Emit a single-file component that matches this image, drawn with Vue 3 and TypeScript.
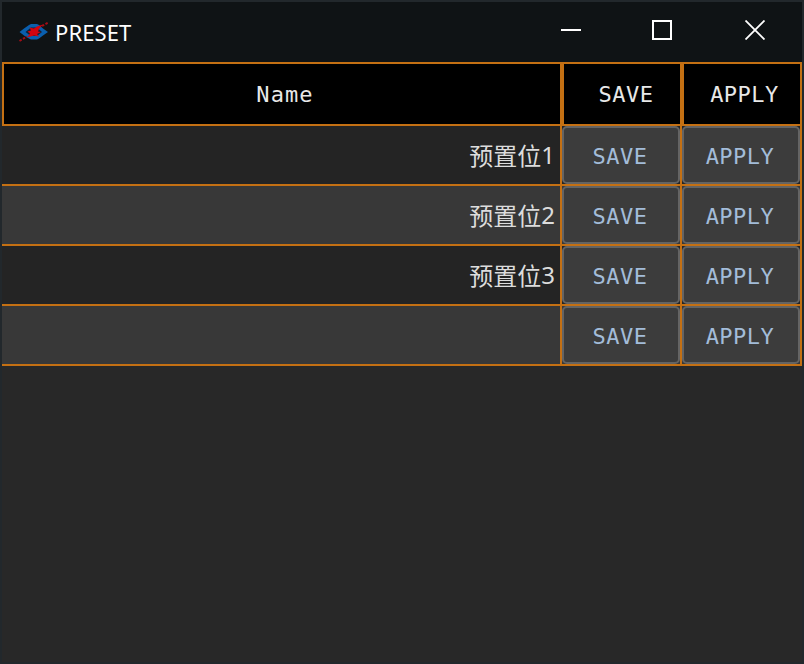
<script setup lang="ts">
import { ref } from 'vue'

interface Preset {
  id: number
  name: string
}

const title = ref('PRESET')
const presets = ref<Preset[]>([
  { id: 1, name: '预置位1' },
  { id: 2, name: '预置位2' },
  { id: 3, name: '预置位3' },
  { id: 4, name: '' },
])

function split(name: string): { label: string; digit: string } {
  return { label: name.replace(/\d+$/, ''), digit: name.match(/\d+$/)?.[0] ?? '' }
}
</script>

<template>
  <div class="window">
    <header class="titlebar">
      <svg class="logo" width="30" height="20" viewBox="0 0 30 20">
        <path d="M0.5 10 L5 6.5 L10 3 L12 2 H18 L20 3 L24 6.5 L29 10 L24 13.5 L20 16.5 L18 17.5 H12 L9 16 L5 13.5 Z" fill="#0a5fae" />
        <path d="M6.5 10 L12 5.5 H18 L23 10 L18 14 H12 Z" fill="#0f2136" />
        <path d="M8 15.5 L11 11.5 L8.5 9.5 L12 8.5 L10.5 5.5 L15 6.5 L18 4.5 L24 2.5 L20 7 L19 9.5 L22 10 L18 12 L20 14.5 L15 13.5 Z" fill="#d2040f" />
        <path d="M0.5 19 L8 14.5 M23 4 L29 0.6" stroke="#a30d16" stroke-width="2" stroke-dasharray="2.5 1.5" />
      </svg>
      <span class="title">{{ title }}</span>
      <div class="controls">
        <svg width="20" height="20" viewBox="0 0 20 20"><path d="M0 10H20" /></svg>
        <svg width="20" height="20" viewBox="0 0 20 20"><path d="M1 1H19V19H1Z" /></svg>
        <svg width="20" height="20" viewBox="0 0 20 20"><path class="thin" d="M0.5 0.5L19.5 19.5M19.5 0.5L0.5 19.5" /></svg>
      </div>
    </header>
    <main class="table">
      <div class="row head">
        <div class="th"><span>Name</span></div>
        <div class="th save"><span>SAVE</span></div>
        <div class="th apply"><span>APPLY</span></div>
      </div>
      <div v-for="p in presets" :key="p.id" class="row">
        <div class="td name"><span class="cjk">{{ split(p.name).label }}</span><span class="digit">{{ split(p.name).digit }}</span></div>
        <div class="td"><button type="button">SAVE</button></div>
        <div class="td"><button type="button">APPLY</button></div>
      </div>
    </main>
  </div>
</template>

<style>
body {
  margin: 0;
  background: #282828;
}
</style>

<style scoped>
.window {
  box-sizing: border-box;
  width: 804px;
  height: 664px;
  border: 2px solid #22282c;
  background: #282828;
  overflow: hidden;
}
.titlebar {
  display: flex;
  align-items: center;
  height: 60px;
  background: #0f1315;
  color: #fff;
}
.logo {
  margin-left: 17px;
  flex: none;
}
.title {
  margin-left: 6px;
  padding-bottom: 1px;
  font: 22px/30px "Noto Sans", sans-serif;
  letter-spacing: 0.1px;
}
.controls {
  display: flex;
  gap: 73px;
  margin: -4px 37px 0 auto;
}
.controls svg:first-child {
  margin-right: -2px;
}
.controls svg {
  fill: none;
  stroke: #fff;
  stroke-width: 2;
}
.controls .thin {
  stroke-width: 1.8;
}
.row {
  display: grid;
  grid-template-columns: 560px 120px 120px;
  height: 60px;
  background: #242424;
  font: 22px/28px "DejaVu Sans Mono", monospace;
  letter-spacing: 0.5px;
}
.row:nth-child(odd) {
  background: #383838;
}
.row.head {
  height: 64px;
  background: #000;
  color: #e8e8e8;
}
.th {
  box-sizing: border-box;
  border: 2px solid #c47013;
  display: flex;
  align-items: center;
  justify-content: center;
  padding: 2px 0 0 6px;
}
.th:first-child {
  letter-spacing: 1.1px;
}
.th.save {
  padding-left: 8px;
}
.th.apply {
  padding-left: 5px;
}
.td {
  box-sizing: border-box;
  display: flex;
  border-right: 2px solid #c47013;
  border-bottom: 2px solid #c47013;
  min-width: 0;
}
.name {
  align-items: center;
  justify-content: flex-end;
  padding-right: 5px;
  color: #dcdcdc;
}
.cjk {
  font: 24px/30px "Noto Sans CJK SC", sans-serif;
  letter-spacing: 0;
}
.digit {
  font: 24px/30px "Noto Sans", sans-serif;
  letter-spacing: 0;
}
button {
  box-sizing: border-box;
  width: 100%;
  height: 58px;
  margin: 0;
  padding: 4px 2px 0 0;
  border: 2px solid #646464;
  border-radius: 5px;
  background: #3c3c3c;
  color: #a3bcd9;
  font: inherit;
  letter-spacing: inherit;
}
</style>
